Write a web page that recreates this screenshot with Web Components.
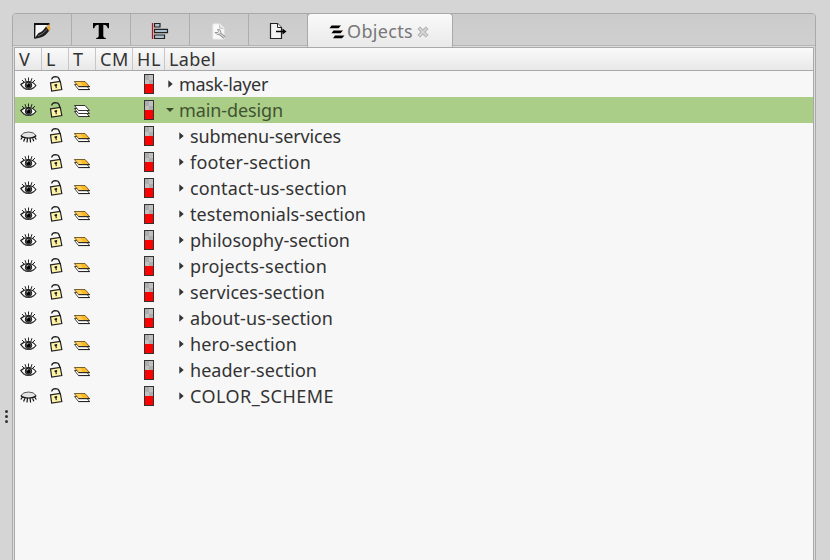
<!DOCTYPE html>
<html lang="en"><head><meta charset="utf-8"><title>Objects</title>
<style>html,body{margin:0;height:100%;overflow:hidden}body{background:#d4d4d4;font:18px "Noto Sans","Open Sans",sans-serif;color:#333}</style></head>
<body><objects-dock></objects-dock>
<script>
const ICONS = {
  fill: '<svg width="18" height="18" viewBox="0 0 18 18"><defs><linearGradient id="a" x2="1" y2="1"><stop stop-color="#fff"/><stop offset=".55" stop-color="#eee"/><stop offset="1" stop-color="#555"/></linearGradient></defs><path d="M1 17V1H16V6L10 12Z" fill="url(#a)"/><path d="M1 17V1h15.500v2.200H3L2.500 15" fill="#111"/><path d="M2.500 3H14L5 13 2.500 15Z" fill="#f6f6f6"/><path d="M1 17L5.500 11Q9.500 10 13 4.500L17 7.500Q13 14 7.500 15.500Z" fill="#1c1c1c"/><path d="M5 14Q10 12 14 7.500" stroke="#777" stroke-width="1" fill="none"/><path d="M13.500 5.500L16 2 17.500 7 16 9Z" fill="#e9a634"/></svg>',
  text: '<svg width="18" height="18" viewBox="0 0 18 18"><path d="M1 1H17V6.200H15.800Q15 2.800 11.300 2.800V14Q11.300 16 13.800 16V17H4.200V16Q6.700 16 6.700 14V2.800Q3 2.800 2.200 6.200H1Z" fill="#000"/></svg>',
  align: '<svg width="18" height="18" viewBox="0 0 18 18"><path d="M1.500 1V17" stroke="#b5121b" stroke-width="1.200"/><g fill="#a9bfcd" stroke="#222" stroke-width="1.200"><path d="M3.500 1.500h5.500v3.500h-5.500zM3.500 7.300h13v3.400h-13zM3.500 13h10v3.500h-10z"/></g></svg>',
  prefs: '<svg width="18" height="18" viewBox="0 0 18 18"><path d="M3 2h7l4 4v11h-11z" fill="#fafafa" stroke="#ececec"/><path d="M9.500 2.500v4h4" fill="#ddd" stroke="#ccc"/><path d="M9.500 11.500L14.500 15.500" stroke="#999" stroke-width="3"/><path d="M9.500 11.500L14.500 15.500" stroke="#eee"/><path d="M7.500 7.500Q11 7 11 10.500 10 13 7 12.500L5 10.500 8 10.500 8.500 9.500Z" fill="#eee" stroke="#999"/></svg>',
  export: '<svg width="18" height="18" viewBox="0 0 18 18"><path d="M1.500 1.500h7l4 4v11h-11z" fill="#f2f2f2" stroke="#222" stroke-width="1.200"/><path d="M8.500 1.500v4h4" fill="#fff" stroke="#222"/><path d="M7 9.500h8" stroke="#000" stroke-width="1.300"/><path d="M13.500 6.500l4 3-4 3z" fill="#000"/></svg>',
  objects: '<svg width="16" height="14" viewBox="0 0 16 14"><path d="M2.500.5H12L9.500 3.200H.5ZM4.500 5.500H14L11.500 8.200H2.500ZM6 10.500H15.500L13 13.200H4Z" fill="#000"/></svg>',
  close: '<svg width="12" height="12" viewBox="0 0 12 12"><path d="M1.800 1.800L10.200 10.200M10.200 1.800L1.800 10.200" stroke="#aaa" stroke-width="3.600"/><path d="M2.200 2.200L9.800 9.800M9.800 2.200L2.200 9.800" stroke="#d8d8d8" stroke-width="1.800"/></svg>',
  eye: '<svg width="17" height="16" viewBox="0 0 17 16"><path d="M.8 8.500Q4 5.500 8.500 5.500T15.900 9.500Q13 13.500 8.500 13.500T.8 8.500Z" fill="#fff" stroke="#1a1a1a" stroke-width="1.200"/><path d="M3 11.500Q8 15.500 14 11.500" fill="none" stroke="#444"/><circle cx="8.500" cy="9.300" r="3.200" fill="#666" stroke="#111"/><circle cx="8.500" cy="9.500" r="2" fill="#000"/><path d="M7 8.300l1.200-1" stroke="#ddd"/><path d="M2 4l2.200 2.200M5 2.200l1 2.900M8.500 1.500v3.300M12 2.200l-1 2.900M15 4l-2.200 2.200" stroke="#222"/></svg>',
  shut: '<svg width="17" height="16" viewBox="0 0 17 16"><path d="M1 8Q3 4 8.500 4T16 8Q12 10.500 8.500 10.500T1 8Z" fill="#e4e4e4"/><path d="M1 7.500Q3 4 8.500 4T16 7.500" stroke="#555" fill="none"/><path d="M.8 7.500Q3 10 8.500 10T16.200 7.500M2.800 8.500l-2 3M5.200 9.500l-1.600 4M7.500 10l-.5 4.500M10 10l.6 4.500M12.300 9.500l1.500 3.800M14.300 8.500l2 3" stroke="#111" stroke-width="1.200" fill="none"/></svg>',
  lock: '<svg width="16" height="18" viewBox="0 0 16 18"><path d="M3.700 4.500Q4 1.800 7.200 1.600 10.700 1.600 11.400 4.500L12 7.500" fill="none" stroke="#222" stroke-width="1.300"/><path d="M2.500 7.800L12.300 6.400 13.800 14.500 3.700 16Z" fill="#fff3a8" stroke="#222" stroke-width="1.200"/><path d="M6.500 9.500l2.500-.4.200 1.500-.7.500.3 2-1 .1-.3-2-.9-.3z" fill="#111"/></svg>',
  layer: '<svg width="18" height="14" viewBox="0 0 18 14"><path d="M1.500 6.500H12.500L16.500 11.500H5.500Z" fill="#fff" stroke="#444"/><path d="M1.300 3.500H12L16.500 8.500H5.500Z" fill="#fbb829" stroke="#5a4010" stroke-width=".8"/><path d="M3 4H7.500L10 8H6Z" fill="#ffd05c"/><path d="M5.500 8.700H16.800M5.500 11.600H16.800" stroke="#222"/></svg>',
  group: '<svg width="18" height="14" viewBox="0 0 18 14"><g fill="#fff" stroke="#333" stroke-linejoin="round"><path d="M1.500 7.500H12L16.500 12.500H5.500Z"/><path d="M1.500 4.500H12L16.500 9.500H5.500Z"/><path d="M1.500 1.500H12L16.500 6.500H5.500Z"/></g></svg>',
  right: '<svg width="6" height="8" viewBox="0 0 6 8"><path d="M.3 .3L4.700 4 .3 7.700Z" fill="#333"/></svg>',
  down: '<svg width="8" height="6" viewBox="0 0 8 6"><path d="M0 1H8L4 5Z" fill="#3b4b2b"/></svg>'
};
class UiIcon extends HTMLElement{
  connectedCallback(){this.attachShadow({mode:'open'}).innerHTML=`<style>:host{display:inline-flex;flex:none}svg{display:block}</style>${ICONS[this.getAttribute('name')]}`}
}
customElements.define('ui-icon',UiIcon);

/* A label whose tracking is set so that the line takes the given width. */
class FitText extends HTMLElement{
  connectedCallback(){
    const text=this.getAttribute('text');
    this.attachShadow({mode:'open'}).innerHTML=`<style>:host{display:inline-block;white-space:pre;line-height:26px}</style><span>${text}</span>`;
    const span=this.shadowRoot.querySelector('span');
    const width=span.getBoundingClientRect().width;
    span.style.letterSpacing=(this.getAttribute('width')-width)/text.length+'px';
  }
}
customElements.define('fit-text',FitText);

class DockTab extends HTMLElement{
  connectedCallback(){this.attachShadow({mode:'open'}).innerHTML=`<style>
  :host{display:flex;box-sizing:border-box;width:59px;height:32px;align-items:center;justify-content:center;padding-top:2px;border-right:1px solid #adadad;border-bottom:1px solid #b4b4b4}
  :host([active]){width:146px;height:34px;margin-left:-1px;padding:1px 0 0 21px;justify-content:flex-start;border:1px solid #a9a9a9;border-bottom:0;border-radius:4px 4px 0 0;background:linear-gradient(#fafafa,#e9e9e9);color:#777}
  </style><slot></slot>`}
}
customElements.define('dock-tab',DockTab);

class HighlightSwatch extends HTMLElement{
  connectedCallback(){this.attachShadow({mode:'open'}).innerHTML=`<style>
  :host{display:block;box-sizing:border-box;width:10px;height:20px;border:1px solid #333;background:linear-gradient(transparent 9px,#f00 9px),conic-gradient(#c0c0c0 25%,#adadad 0 50%,#c0c0c0 0 75%,#adadad 0) 0 0/8px 10px}
  </style>`}
}
customElements.define('highlight-swatch',HighlightSwatch);

class ListHeader extends HTMLElement{
  connectedCallback(){this.attachShadow({mode:'open'}).innerHTML=`<style>
  :host{display:grid;grid-template-columns:27px 27px 27px 37px 32px 1fr;height:22px;background:linear-gradient(#fafafa,#e8e8e8);border-bottom:1px solid #a9a9a9}
  div{display:flex;align-items:flex-start;border-right:1px solid #c6c6c6;padding-left:4px;height:22px}
  div:last-child{border:0}
  fit-text{margin-top:-2px}
  </style><div><fit-text text="V" width="13"></fit-text></div><div><fit-text text="L" width="10"></fit-text></div><div><fit-text text="T" width="11"></fit-text></div><div><fit-text text="CM" width="29"></fit-text></div><div><fit-text text="HL" width="24"></fit-text></div><div><fit-text text="Label" width="47"></fit-text></div>`}
}
customElements.define('list-header',ListHeader);

class ObjectRow extends HTMLElement{
  connectedCallback(){
    const a=n=>this.getAttribute(n),open=this.hasAttribute('open');
    this.attachShadow({mode:'open'}).innerHTML=`<style>
    :host{display:grid;grid-template-columns:27px 27px 27px 48px 21px 1fr;height:26px;align-items:center}
    :host([open]){background:#aacd88;color:#3f5330}
    .v{padding-left:5px}.l{padding:0 0 0 6px}.t{padding:1px 0 0 4px}
    .name{display:flex;align-items:center;padding-left:3px;height:26px}
    :host([child]) .name{padding-left:14px}
    .arrow{width:11px;display:flex}
    .open{margin-left:-2px;width:13px}
    .name fit-text{margin-top:-1px}
    </style><ui-icon class="v" name="${a('eye')||'eye'}"></ui-icon><ui-icon class="l" name="lock"></ui-icon><ui-icon class="t" name="${open?'group':'layer'}"></ui-icon><highlight-swatch style="grid-column:5"></highlight-swatch><div class="name"><span class="arrow ${open?'open':''}"><ui-icon name="${open?'down':'right'}"></ui-icon></span><fit-text text="${a('label')}" width="${a('width')}"></fit-text></div>`}
}
customElements.define('object-row',ObjectRow);

class ObjectsDock extends HTMLElement{
  connectedCallback(){
    const rows=[['submenu-services',151,'shut'],['footer-section',121],['contact-us-section',157],['testemonials-section',176],['philosophy-section',160],['projects-section',137],['services-section',135],['about-us-section',143],['hero-section',107],['header-section',127],['COLOR_SCHEME',144,'shut']];
    this.attachShadow({mode:'open'}).innerHTML=`<style>
    :host{display:flex;height:560px;padding-top:13px;box-sizing:border-box;background:#d5d5d5}
    .grip{width:12px;display:flex;flex-direction:column;align-items:center;gap:2px;padding:397px 0 0 0;box-sizing:border-box}
    .grip i{width:3px;height:3px;border-radius:50%;background:#333}
    .book{width:804px;height:560px;box-sizing:border-box;border:1px solid #a9a9a9;border-radius:4px 4px 0 0;background:#dedede;overflow:hidden}
    .tabs{display:flex;height:33px;margin-top:-1px;background:linear-gradient(#cbcbcb,#d0d0d0);border-top:1px solid #a9a9a9;box-sizing:border-box}
    .rest{flex:1;height:32px;box-sizing:border-box;border-bottom:1px solid #b4b4b4}
    .list{margin:1px 1px 0;border:1px solid #a9a9a9;height:520px;background:#f7f7f7}
    dock-tab[active]{margin-top:-1px}
    dock-tab[active] ui-icon{margin-top:1px}
    </style><div class="grip"><i></i><i></i><i></i></div><div class="book"><div class="tabs">${['fill','text','align','prefs','export'].map(n=>`<dock-tab><ui-icon name="${n}"></ui-icon></dock-tab>`).join('')}<dock-tab active><ui-icon name="objects"></ui-icon><fit-text style="margin:0 4px 0 2px" text="Objects" width="66"></fit-text><ui-icon name="close"></ui-icon></dock-tab><div class="rest"></div></div>
    <div class="list"><list-header></list-header><object-row label="mask-layer" width="89"></object-row><object-row open label="main-design" width="104"></object-row>${rows.map(r=>`<object-row child label="${r[0]}" width="${r[1]}" eye="${r[2]||'eye'}"></object-row>`).join('')}</div></div>`}
}
customElements.define('objects-dock',ObjectsDock);
</script></body></html>
